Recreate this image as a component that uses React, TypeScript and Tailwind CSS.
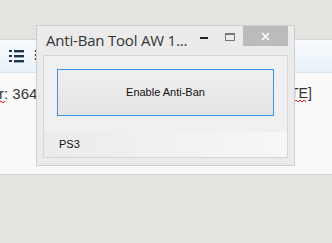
import React from "react";

const ListIcon: React.FC = () => (
  <svg width="15" height="13" viewBox="0 0 15 13" className="block">
    <rect x="0" y="0" width="3" height="2" fill="#1e3350" />
    <rect x="0" y="5" width="3" height="2" fill="#1e3350" />
    <rect x="0" y="10" width="3" height="2" fill="#1e3350" />
    <rect x="5" y="0" width="10" height="2.4" fill="#1e3350" />
    <rect x="5" y="5" width="10" height="2.4" fill="#1e3350" />
    <rect x="5" y="10" width="10" height="2.4" fill="#1e3350" />
  </svg>
);

const Squiggle: React.FC<{ width: number }> = ({ width }) => {
  const pts: string[] = [];
  for (let x = 0; x <= width; x += 2) pts.push(`${x},${(x / 2) % 2 === 0 ? 2 : 0}`);
  return (
    <svg width={width} height="3" className="absolute left-0 -bottom-[2px]">
      <polyline points={pts.join(" ")} fill="none" stroke="#e02020" strokeWidth="1" />
    </svg>
  );
};

const App: React.FC = () => {
  return (
    <div className="relative w-[332px] h-[243px] overflow-hidden bg-[#e4e3e0]">
      <div className="h-[39px]" />
      <div className="h-[136px] bg-[#faf9f8] border-y border-[#d4d4d4] flex flex-col">
        <div className="h-[33px] border-b border-[#d8e4ee] bg-gradient-to-b from-[#f9fbfd] to-[#e8f1fa] flex items-center pl-[9px] gap-[10px]">
          <ListIcon />
          <span className="text-[#1e3350] text-[12px] font-bold">⁝</span>
        </div>
        <div
          className="relative h-[40px] text-[15px] text-[#333] leading-none"
          style={{ fontFamily: '"Liberation Sans", Arial, sans-serif' }}
        >
          <span className="absolute left-[-1px] top-[13px]">
            <span className="relative">
              r
              <Squiggle width={7} />
            </span>
            : 364
          </span>
          <span className="absolute left-[290px] top-[13px] text-[14px]">
            <span className="relative">
              TE
              <Squiggle width={16} />
            </span>
            ]
          </span>
        </div>
      </div>

      {/* window */}
      <div
        className="absolute left-[36px] top-[25px] w-[259px] h-[141px] bg-[#ebebeb] border border-[#cfcfcf] flex flex-col"
        style={{ fontFamily: '"Liberation Sans", Arial, sans-serif' }}
      >
        <div className="h-[29px] flex items-start">
          <div
            className="pl-[9px] pt-[7px] text-[15px] tracking-[-0.2px] leading-none text-[#333] whitespace-nowrap"
            style={{ fontFamily: '"Open Sans", "Noto Sans", sans-serif' }}
          >
            Anti-Ban Tool AW 1...
          </div>
          <div className="ml-auto flex items-start">
            <div className="w-[26px] h-[20px] flex items-center justify-center pt-[4px]">
              <div className="w-[8px] h-[2px] bg-[#222]" />
            </div>
            <div className="w-[26px] h-[20px] flex items-start justify-center pt-[7px]">
              <div className="w-[10px] h-[8px] border border-[#777] border-t-2" />
            </div>
            <div className="w-[45px] h-[20px] bg-[#bbbbbb] flex items-center justify-center">
              <svg width="9" height="9" viewBox="0 0 9 9">
                <path d="M1 1 L8 8 M8 1 L1 8" stroke="#fff" strokeWidth="1.6" />
              </svg>
            </div>
            <div className="w-[6px]" />
          </div>
        </div>
        <div className="mx-[6px] h-[103px] bg-[#f0f0f0] border border-[#d6d6d6] flex flex-col">
          <div className="px-[13px] pt-[13px] h-[76px]">
            <div className="h-[47px] p-px bg-[#3d94e8]">
              <div className="h-full bg-gradient-to-b from-[#efefef] to-[#e4e4e4] flex items-center justify-center text-[11px] text-[#111]">
                Enable Anti-Ban
              </div>
            </div>
          </div>
          <div className="flex-1 bg-gradient-to-r from-[#ebebeb] to-[#f7f7f7] flex items-center pl-[15px] text-[11px] text-[#111]">
            PS3
          </div>
        </div>
      </div>
    </div>
  );
};

export default App;
